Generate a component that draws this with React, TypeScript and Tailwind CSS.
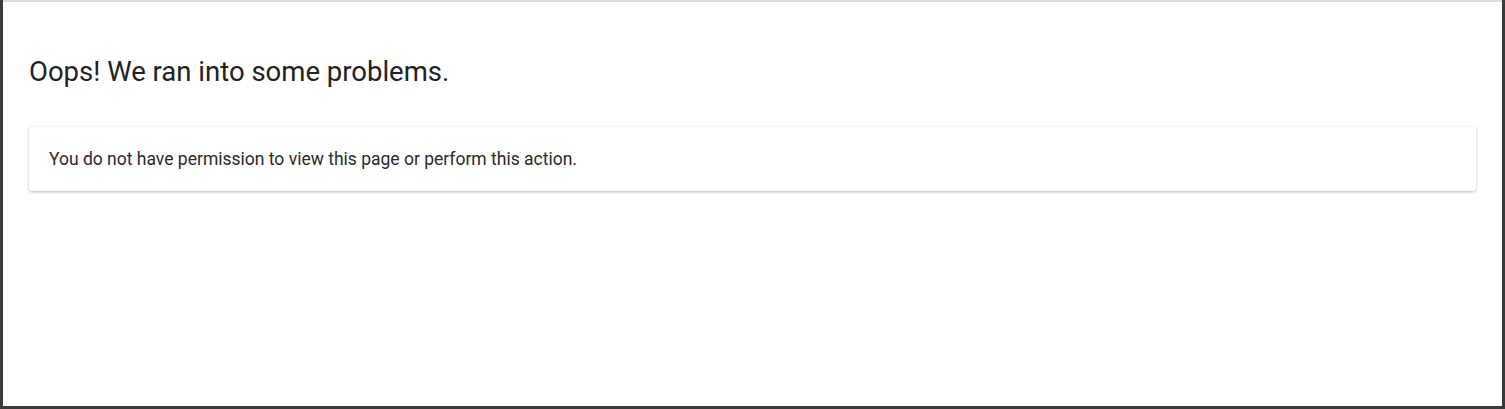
import React from "react";

const App = () => {
  return (
    <div className="h-[409px] w-[1505px] bg-[#3a3a38] pl-[3px] pr-[3px] pb-[3px] font-['Roboto',sans-serif]">
      <div className="h-full w-full border-t-2 border-[#dcdcdc] bg-white px-[26px] pt-[52px]">
        <h1 className="text-[27.5px] leading-[36px] text-[#222]">
          Oops! We ran into some problems.
        </h1>
        <div className="mt-[37px] rounded-[3px] bg-white px-5 py-5 shadow-[0_1px_3px_rgba(0,0,0,0.28)]">
          <p className="text-[17.5px] leading-6 text-[#2a2a2a]">
            You do not have permission to view this page or perform this action.
          </p>
        </div>
      </div>
    </div>
  );
};

export default App;
